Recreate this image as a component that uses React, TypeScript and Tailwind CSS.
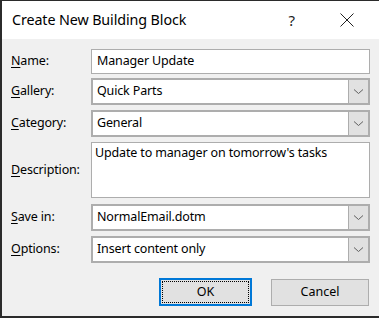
import React from "react";

const font = { fontFamily: '"Noto Sans", "Open Sans", sans-serif' };

function Chevron() {
  return (
    <svg width="11" height="7" viewBox="0 0 11 7" fill="none">
      <path d="M1 1.5 L5.5 5.5 L10 1.5" stroke="#606060" strokeWidth="1" />
    </svg>
  );
}

function Label({ letter, rest }: { letter: string; rest: string }) {
  return (
    <div className="w-[80px] shrink-0 text-[12.5px] tracking-[-0.15px] text-black">
      <span className="underline underline-offset-2">{letter}</span>
      {rest}
    </div>
  );
}

function SelectBox({ value }: { value: string }) {
  return (
    <div className="flex flex-1 h-full border-2 border-[#adadad] bg-white">
      <div className="flex-1 flex items-center pl-[4px] text-[12.5px] tracking-[-0.15px] text-black">
        {value}
      </div>
      <div className="w-[20px] flex items-center justify-center bg-[#e1e1e1] border-l border-[#adadad]">
        <Chevron />
      </div>
    </div>
  );
}

export default function App() {
  return (
    <div
      className="w-[379px] h-[318px] flex flex-col border-l-2 border-t border-b-2 border-[#2b2b2b] bg-[#f0f0f0]"
      style={font}
    >
      <div className="h-[38px] bg-white flex items-center pl-[10px] pr-[25px] shrink-0">
        <div className="flex-1 text-[14.3px] tracking-[-0.1px] text-black">Create New Building Block</div>
        <div className="text-[15px] text-[#222] mr-[45px]">?</div>
        <svg width="14" height="14" viewBox="0 0 14 14">
          <path d="M0.5 0.5 L13.5 13.5 M13.5 0.5 L0.5 13.5" stroke="#222" strokeWidth="1" />
        </svg>
      </div>

      <div className="flex flex-col pl-[9px] pr-[9px] pt-[10px]">
        <div className="flex items-center h-[25px]">
          <Label letter="N" rest="ame:" />
          <div className="flex-1 h-full border border-[#adadad] bg-white flex items-center pl-[5px] text-[12.5px] tracking-[-0.15px] text-black">
            Manager Update
          </div>
        </div>

        <div className="flex items-center h-[27px] mt-[4px]">
          <Label letter="G" rest="allery:" />
          <SelectBox value="Quick Parts" />
        </div>

        <div className="flex items-center h-[27px] mt-[5px]">
          <Label letter="C" rest="ategory:" />
          <SelectBox value="General" />
        </div>

        <div className="flex items-center h-[56px] mt-[5px]">
          <Label letter="D" rest="escription:" />
          <div className="flex-1 h-full border border-[#adadad] bg-white pl-[3px] pt-[1px] text-[12.5px] tracking-[-0.15px] text-black leading-[18px]">
            Update to manager on tomorrow's tasks
          </div>
        </div>

        <div className="flex items-center h-[27px] mt-[6px]">
          <Label letter="S" rest="ave in:" />
          <SelectBox value="NormalEmail.dotm" />
        </div>

        <div className="flex items-center h-[27px] mt-[5px]">
          <Label letter="O" rest="ptions:" />
          <SelectBox value="Insert content only" />
        </div>

        <div className="flex justify-end items-center gap-[19px] mt-[15px] pr-[1px]">
          <div className="w-[93px] h-[28px] border-2 border-[#0078d7] bg-[#e1e1e1] p-[1px]">
            <div className="w-full h-full border border-dotted border-black flex items-center justify-center text-[12.5px] text-black">
              OK
            </div>
          </div>
          <div className="w-[98px] h-[27px] border border-[#adadad] bg-[#e1e1e1] flex items-center justify-center text-[12.5px] text-black">
            Cancel
          </div>
        </div>
      </div>
    </div>
  );
}
